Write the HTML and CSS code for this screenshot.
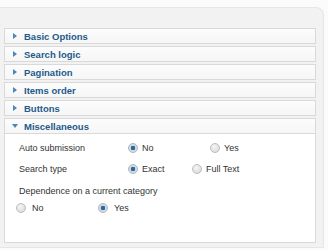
FILE: index.html
```html
<!DOCTYPE html>
<html lang="en">
<head>
  <meta charset="UTF-8">
  <meta name="viewport" content="width=device-width, initial-scale=1.0">
  <title>Search Module Options</title>
  <link rel="stylesheet" href="styles.css">
</head>
<body>

<div class="panel">
  <div class="bar"><span class="arrow"></span>Basic Options</div>
  <div class="bar"><span class="arrow"></span>Search logic</div>
  <div class="bar"><span class="arrow"></span>Pagination</div>
  <div class="bar"><span class="arrow"></span>Items order</div>
  <div class="bar"><span class="arrow"></span>Buttons</div>
  <div class="bar bar-open"><span class="arrow arrow-down"></span>Miscellaneous</div>

  <!-- open section -->
  <div class="content">
    <div class="row">
      <div class="label">Auto submission</div>
      <label class="option w82"><span class="radio checked"></span>No</label>
      <label class="option"><span class="radio"></span>Yes</label>
    </div>
    <div class="row">
      <div class="label">Search type</div>
      <label class="option w64"><span class="radio checked"></span>Exact</label>
      <label class="option"><span class="radio"></span>Full Text</label>
    </div>
    <div class="label-line">Dependence on a current category</div>
    <div class="row row-plain">
      <label class="option w82"><span class="radio"></span>No</label>
      <label class="option"><span class="radio checked"></span>Yes</label>
    </div>
  </div>
</div>

</body>
</html>
```

FILE: styles.css
```css
* {
  margin: 0;
  padding: 0;
  box-sizing: border-box;
}
body {
  background: #fbfbfb;
  font-family: 'Liberation Sans', Arial, sans-serif;
  font-size: 9px;
  color: #333;
  padding-top: 7px;
}
.panel {
  width: 324px;
  height: 241px;
  background: #f2f2f2;
  border: 1px solid #e6e6e6;
  border-left: none;
  border-top-right-radius: 8px;
  padding: 20px 7px 0 4px;
}
.bar {
  display: flex;
  align-items: center;
  height: 16px;
  margin-bottom: 2px;
  padding-left: 8px;
  background: linear-gradient(#fcfcfc, #f6f6f6);
  border: 1px solid #d9d9d9;
  color: #1f5a8a;
  font-weight: bold;
  font-size: 9.5px;
}
.bar-open {
  margin-bottom: 0;
}
.arrow {
  width: 0;
  height: 0;
  margin-right: 7px;
  border-top: 3px solid transparent;
  border-bottom: 3px solid transparent;
  border-left: 4px solid #4b87bb;
}
.arrow-down {
  margin-left: -1px;
  margin-right: 6px;
  border-left: 3px solid transparent;
  border-right: 3px solid transparent;
  border-top: 4px solid #4b87bb;
  border-bottom: none;
}
.content {
  height: 109px;
  background: #fff;
  border: 1px solid #d9d9d9;
  border-top: none;
  padding: 3px 0 0 14px;
}
.row {
  display: flex;
  align-items: center;
  height: 21px;
}
.label {
  width: 109px;
}
.label-line {
  margin-top: 5px;
  line-height: 14px;
}
.row-plain {
  height: 20px;
  margin-left: -3px;
}
.row-plain .option {
  gap: 6px;
}
.option {
  display: flex;
  align-items: center;
  gap: 4px;
}
.w82 {
  width: 82px;
}
.w64 {
  width: 64px;
}
.radio {
  width: 10px;
  height: 10px;
  border-radius: 50%;
  border: 1px solid #bdbdbd;
  background: radial-gradient(circle at 40% 35%, #f6f6f6, #d4d4d4);
}
.radio.checked {
  border-color: #a9b4bd;
  background: radial-gradient(circle, #2f6796 0, #2f6796 2px, #c9d6e0 2.5px, #e4e9ee 5px);
}
```
